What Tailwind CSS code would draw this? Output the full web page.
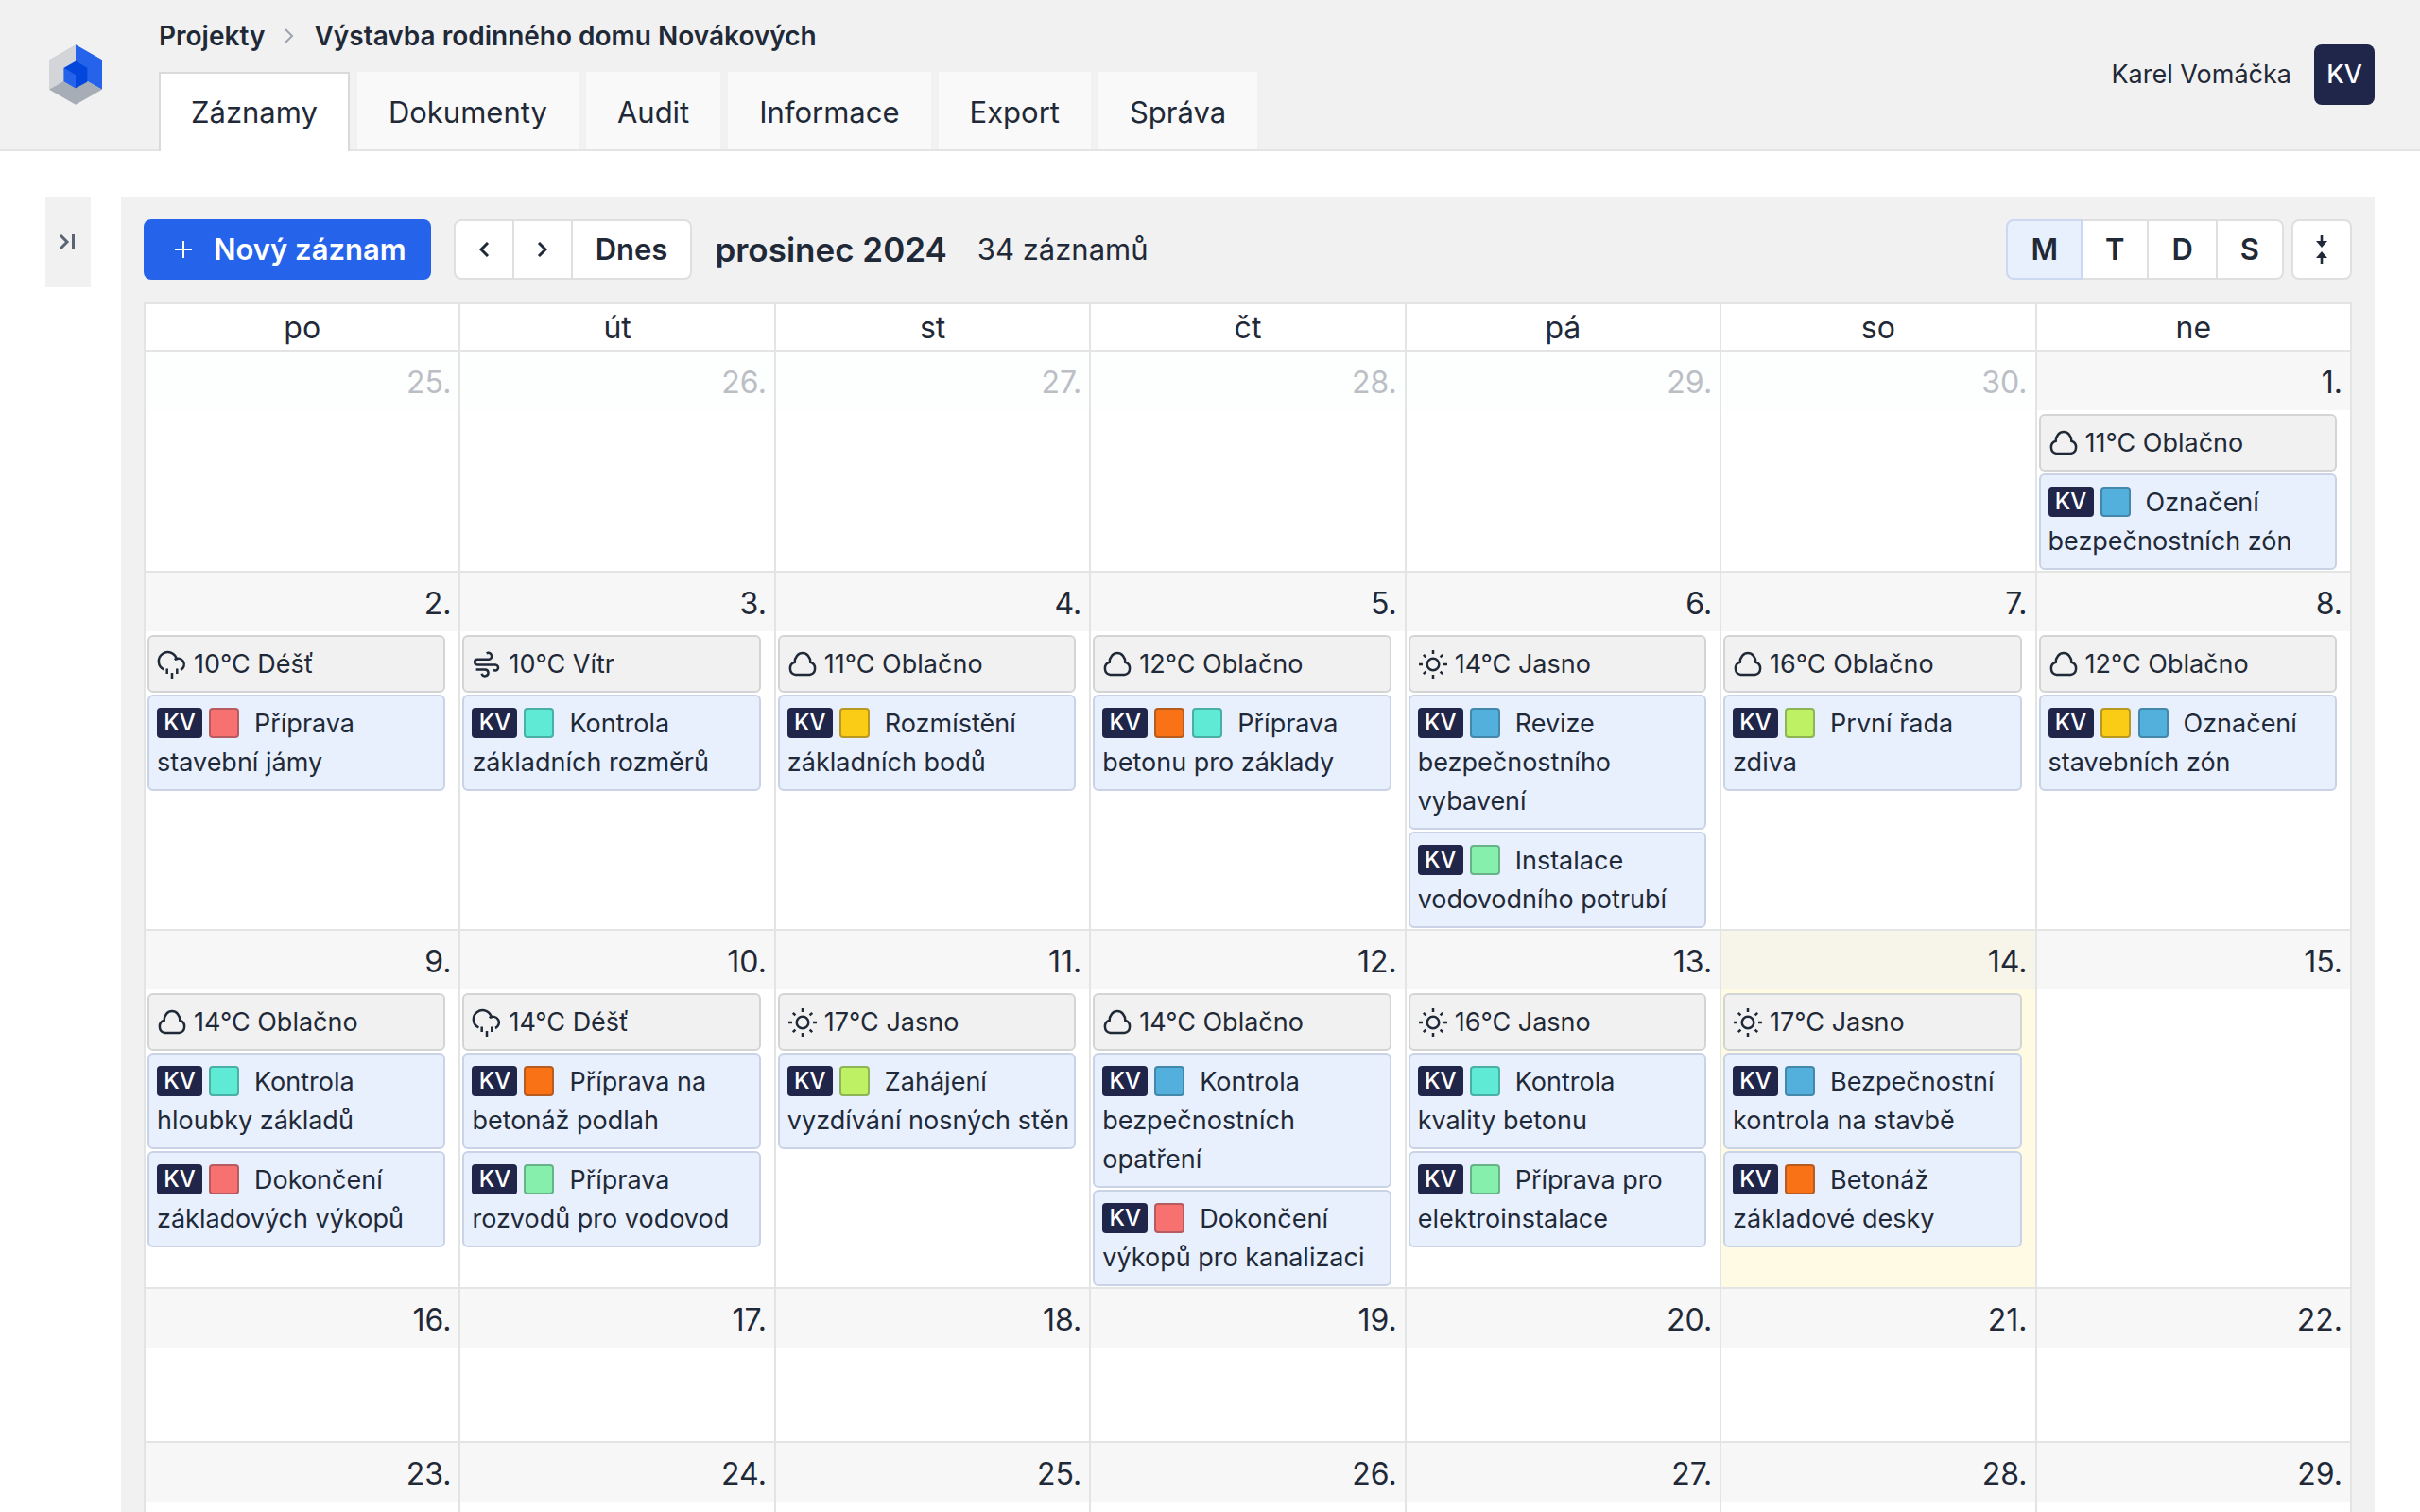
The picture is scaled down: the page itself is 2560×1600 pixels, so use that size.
<!DOCTYPE html>
<html lang="cs">
<head>
<meta charset="utf-8">
<title>Výstavba rodinného domu Novákových</title>
<script src="https://cdn.jsdelivr.net/npm/@tailwindcss/browser@4"></script>
</head>
<body class="flex h-screen flex-col overflow-hidden bg-white font-['Inter',sans-serif] text-[27px] text-[#1f2937]">

<svg class="hidden" aria-hidden="true">
  <symbol id="cloud" viewBox="0 0 32 32" stroke-width="2.5"><path d="M8.5 27H23.5A6.8 6.8 0 0 0 24.3 13.8A8.3 9.8 0 0 0 7.7 13.8A6.8 6.8 0 0 0 8.5 27Z"/></symbol>
  <symbol id="rain" viewBox="0 0 32 32" stroke-width="2.5"><path d="M7.4 21.4A9.6 9.6 0 1 1 21 11.6M18.6 11A6.4 6.4 0 1 1 25 22M10.7 20.5V26M21.3 20.5V26M16 25V31"/></symbol>
  <symbol id="wind" viewBox="0 0 32 32" stroke-width="2.5"><path d="M15.7 4.4A3.5 3.5 0 1 1 18.2 10.8H6A2.8 2.8 0 0 0 6 16.4H25.2A3.1 3.1 0 1 1 22.8 21.8M4.6 21.4H13.8A3.5 3.5 0 1 1 10.6 25.8"/></symbol>
  <symbol id="sun" viewBox="0 0 32 32" stroke-width="2.5"><circle cx="16" cy="16" r="6.3"/><path d="M16 1V5M16 27V31M1 16H5M27 16H31M5.8 5.8L8.4 8.4M23.6 23.6L26.2 26.2M5.8 26.2L8.4 23.6M23.6 8.4L26.2 5.8"/></symbol>
</svg>

<header class="flex shrink-0 border-b-2 border-[#e3e5e5] bg-[#f1f1f1] pr-12 pl-[52px]">
  <a href="#" aria-label="Domů" class="mr-[60px] mt-[47px]">
    <svg class="h-16 w-14" viewBox="36 34 168 190">
      <path fill="#d3d5d8" d="M120 34L36 82V176L120 130Z"/>
      <path fill="#2563eb" d="M120 34L204 82V176L120 130Z"/>
      <path fill="#a6adb6" d="M36 176L120 128L204 176L120 224Z"/>
      <path fill="#0346dc" d="M120 86L157 107V152L120 172L83 150V107Z"/>
      <path fill="#2563eb" d="M83 107L120 130V172L83 150Z"/>
    </svg>
  </a>
  <div class="flex flex-1 flex-col">
    <nav aria-label="Cesta" class="flex h-[76px] items-center text-[28px] font-semibold">
      <a href="#">Projekty</a>
      <svg class="mx-5 h-4 w-3 fill-none stroke-[#9ca3af] stroke-2" viewBox="0 0 12 16"><path d="M2 1L9 8L2 15"/></svg>
      <a href="#">Výstavba rodinného domu Novákových</a>
    </nav>
    <nav aria-label="Sekce" class="-mb-[2px] flex gap-2 text-[31px] leading-[80px]">
      <a href="#" aria-current="page" class="h-[84px] border-x-2 border-t-2 border-[#d9dbdb] bg-white px-8 pt-px">Záznamy</a>
      <a href="#" class="h-[84px] border-b-2 border-[#e3e5e5] bg-[#f9f9f9] px-[33px] pt-[3px]">Dokumenty</a>
      <a href="#" class="h-[84px] border-b-2 border-[#e3e5e5] bg-[#f9f9f9] px-[33px] pt-[3px]">Audit</a>
      <a href="#" class="h-[84px] border-b-2 border-[#e3e5e5] bg-[#f9f9f9] px-[33px] pt-[3px]">Informace</a>
      <a href="#" class="h-[84px] border-b-2 border-[#e3e5e5] bg-[#f9f9f9] px-[33px] pt-[3px]">Export</a>
      <a href="#" class="h-[84px] border-b-2 border-[#e3e5e5] bg-[#f9f9f9] px-[33px] pt-[3px]">Správa</a>
    </nav>
  </div>
  <div class="flex items-center gap-6">
    <span>Karel Vomáčka</span>
    <span class="flex size-16 items-center justify-center rounded-lg bg-[#20254a] font-medium text-white">KV</span>
  </div>
</header>

<main class="flex min-h-0 flex-1 gap-8 px-12 pt-12">
  <button aria-label="Rozbalit panel" class="flex h-24 w-12 shrink-0 items-center justify-center bg-[#f1f1f1]">
    <svg class="h-4 w-4 fill-none stroke-[#5b6472] stroke-3" viewBox="0 0 16 16"><path d="M0 1L7 8L0 15M13.5 0V16"/></svg>
  </button>

  <section class="min-w-0 flex-1 overflow-hidden bg-[#f1f1f1] p-6">
    <div class="flex h-16 items-center">
      <button class="mr-6 flex h-16 items-center gap-[22px] rounded-lg bg-[#2563eb] pr-[26px] pl-8 text-[31px] font-semibold text-white">
        <svg class="size-5 stroke-white stroke-2" viewBox="0 0 20 20"><path d="M10 1V19M1 10H19"/></svg>
        Nový záznam
      </button>
      <div class="flex h-16 items-stretch divide-x-2 divide-[#dfdfdf] rounded-lg border-2 border-[#dfdfdf] bg-white text-[31px] font-semibold">
        <button aria-label="Předchozí" class="flex w-[62px] items-center justify-center"><svg class="h-4 w-3 fill-none stroke-[#1f2937] stroke-3" viewBox="0 0 12 16"><path d="M10 1L3 8L10 15"/></svg></button>
        <button aria-label="Další" class="flex w-[62px] items-center justify-center"><svg class="h-4 w-3 fill-none stroke-[#1f2937] stroke-3" viewBox="0 0 12 16"><path d="M2 1L9 8L2 15"/></svg></button>
        <button class="px-6">Dnes</button>
      </div>
      <h1 class="mr-8 ml-6 text-[35px] font-semibold">prosinec 2024</h1>
      <span class="text-[31px]">34 záznamů</span>
      <div class="mr-2 ml-auto flex h-16 items-stretch text-[31px] font-semibold">
        <button class="rounded-l-lg border-2 border-[#cbd8ef] bg-[#e8f0fe] px-6">M</button>
        <button class="border-y-2 border-r-2 border-[#dfdfdf] bg-white px-6">T</button>
        <button class="border-y-2 border-r-2 border-[#dfdfdf] bg-white px-6">D</button>
        <button class="rounded-r-lg border-y-2 border-r-2 border-[#dfdfdf] bg-white px-6">S</button>
      </div>
      <button aria-label="Sbalit řádky" class="flex size-16 items-center justify-center rounded-lg border-2 border-[#dfdfdf] bg-white">
        <svg class="h-[30px] w-3 fill-[#1f2937]" viewBox="0 0 12 30"><path d="M4.7 0H7.3V6H12L6 13L0 6H4.7ZM6 17L12 24H7.3V30H4.7V24H0Z"/></svg>
      </button>
    </div>

    <table class="mt-6 w-full table-fixed border-separate border-spacing-0 border-r-2 border-[#e3e5e5] bg-white">
      <thead>
        <tr id="weekdays"></tr>
      </thead>
      <tbody id="weeks"></tbody>
    </table>
  </section>
</main>

<script>
const swatches = {
  red: 'bg-[#f87171]', teal: 'bg-[#5eead4]', yellow: 'bg-[#facc15]', orange: 'bg-[#f97316]',
  blue: 'bg-[#53b0dd]', lime: 'bg-[#bef264]', green: 'bg-[#86efac]'
};
const icons = { 'Oblačno': 'cloud', 'Déšť': 'rain', 'Vítr': 'wind', 'Jasno': 'sun' };

const days = {
  1: [11, 'Oblačno', ['blue', 'Označení bezpečnostních zón']],
  2: [10, 'Déšť', ['red', 'Příprava stavební jámy']],
  3: [10, 'Vítr', ['teal', 'Kontrola základních rozměrů']],
  4: [11, 'Oblačno', ['yellow', 'Rozmístění základních bodů']],
  5: [12, 'Oblačno', ['orange teal', 'Příprava betonu pro základy']],
  6: [14, 'Jasno', ['blue', 'Revize bezpečnostního vybavení'], ['green', 'Instalace vodovodního potrubí']],
  7: [16, 'Oblačno', ['lime', 'První řada zdiva']],
  8: [12, 'Oblačno', ['yellow blue', 'Označení stavebních zón']],
  9: [14, 'Oblačno', ['teal', 'Kontrola hloubky základů'], ['red', 'Dokončení základových výkopů']],
  10: [14, 'Déšť', ['orange', 'Příprava na betonáž podlah'], ['green', 'Příprava rozvodů pro vodovod']],
  11: [17, 'Jasno', ['lime', 'Zahájení vyzdívání nosných stěn']],
  12: [14, 'Oblačno', ['blue', 'Kontrola bezpečnostních opatření'], ['red', 'Dokončení výkopů pro kanalizaci']],
  13: [16, 'Jasno', ['teal', 'Kontrola kvality betonu'], ['green', 'Příprava pro elektroinstalace']],
  14: [17, 'Jasno', ['blue', 'Bezpečnostní kontrola na stavbě'], ['orange', 'Betonáž základové desky']]
};
const today = 14;

function record([colors, title]) {
  const boxes = colors.split(' ').map(c =>
    `<span class="mr-2 inline-block size-8 rounded-sm border-2 border-[#1f2937]/30 align-[-6px] ${swatches[c]}"></span>`).join('');
  return `<a href="#" class="block rounded-md border-2 border-[#c9d3e5] bg-[#e8f0fe] py-2 pr-[5px] pl-2 leading-[41px]"><span class="mr-[7px] inline-block h-8 w-12 overflow-hidden rounded-sm bg-[#20254a] text-center align-[-6px] text-[24px] leading-8 font-medium text-white">KV</span>${boxes}<span class="ml-2">${title}</span></a>`;
}

function cell(number, outside) {
  const day = outside ? null : days[number];
  const isToday = !outside && number === today;
  const events = day ? `<div class="flex flex-col gap-[2px] pt-1 pr-[14px] pb-px pl-[2px]">
      <div class="flex items-center gap-[7px] rounded-md border-2 border-[#d3d5d5] bg-[#f1f1f1] p-2 leading-[41px]"><svg class="size-8 fill-none stroke-[#1f2937]"><use href="#${icons[day[1]]}"/></svg>${day[0]}°C ${day[1]}</div>
      ${day.slice(2).map(record).join('')}
    </div>` : '';
  const head = outside ? 'bg-[#fdfefe] text-[#bcbec6]' : isToday ? 'bg-[#f7f5e9]' : 'bg-[#f7f7f7]';
  return `<td class="h-[163px] border-t-2 border-l-2 border-[#e3e5e5] p-0 align-top ${isToday ? 'bg-[#fffae3]' : ''}"><div class="h-[62px] pr-2 text-right text-[32px] leading-[66px] ${head}">${number}.</div>${events}</td>`;
}

document.getElementById('weekdays').innerHTML = ['po', 'út', 'st', 'čt', 'pá', 'so', 'ne'].map(d =>
  `<th scope="col" class="h-[50px] border-t-2 border-l-2 border-[#e3e5e5] p-0 pt-[2px] text-[32px] leading-[46px] font-normal">${d}</th>`).join('');

let rows = '';
for (let week = 0; week < 5; week++) {
  rows += '<tr>';
  for (let i = 0; i < 7; i++) {
    const n = week * 7 + i - 5;
    rows += n < 1 ? cell(n + 30, true) : cell(n, false);
  }
  rows += '</tr>';
}
document.getElementById('weeks').innerHTML = rows;
</script>
</body>
</html>
